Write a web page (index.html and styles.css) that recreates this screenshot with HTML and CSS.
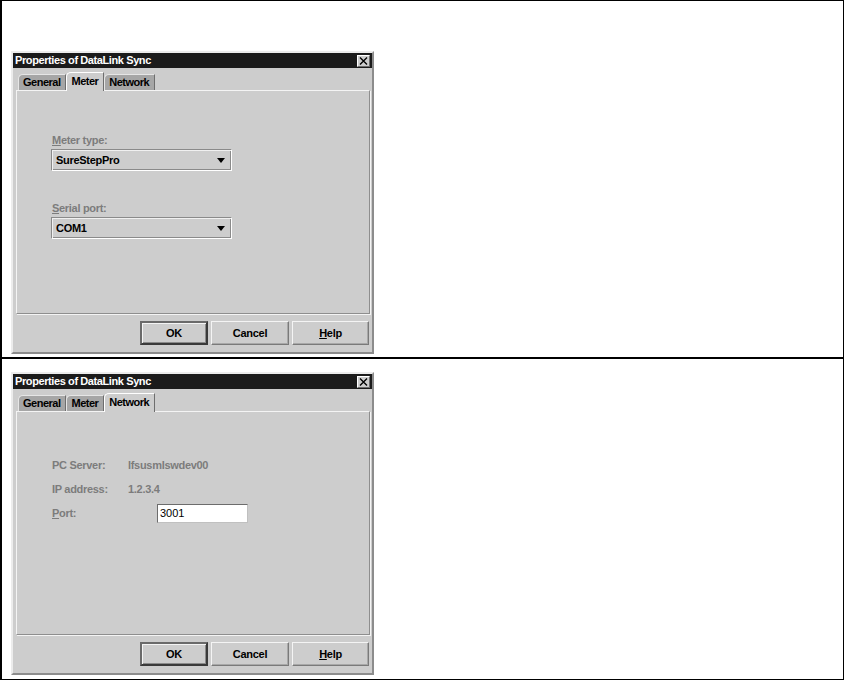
FILE: index.html
```html
<!DOCTYPE html>
<html>
<head>
<meta charset="utf-8">
<link rel="stylesheet" href="styles.css">
</head>
<body>
<div class="frame">
  <div class="cell cell-top">
    <div class="dialog">
      <div class="titlebar">
        <span class="title">Properties of DataLink Sync</span>
        <span class="close"><svg width="9" height="8" viewBox="0 0 9 8"><path d="M1 0.5 L8 7.5 M8 0.5 L1 7.5" stroke="#000" stroke-width="1.4" fill="none"/></svg></span>
      </div>
      <div class="tabs">
        <div class="tab">General</div>
        <div class="tab tab-active">Meter</div>
        <div class="tab">Network</div>
      </div>
      <div class="panel panel-meter">
        <div class="label"><u>M</u>eter type:</div>
        <div class="combo"><span>SureStepPro</span><span class="arrow"></span></div>
        <div class="label label-serial"><u>S</u>erial port:</div>
        <div class="combo"><span>COM1</span><span class="arrow"></span></div>
      </div>
      <div class="buttons">
        <div class="btn btn-default">OK</div>
        <div class="btn btn-cancel">Cancel</div>
        <div class="btn btn-help"><u>H</u>elp</div>
      </div>
    </div>
  </div>
  <div class="cell cell-bottom">
    <div class="dialog">
      <div class="titlebar">
        <span class="title">Properties of DataLink Sync</span>
        <span class="close"><svg width="9" height="8" viewBox="0 0 9 8"><path d="M1 0.5 L8 7.5 M8 0.5 L1 7.5" stroke="#000" stroke-width="1.4" fill="none"/></svg></span>
      </div>
      <div class="tabs">
        <div class="tab">General</div>
        <div class="tab">Meter</div>
        <div class="tab tab-active">Network</div>
      </div>
      <div class="panel panel-net">
        <div class="row"><span class="key">PC Server:</span><span class="val">lfsusmlswdev00</span></div>
        <div class="row"><span class="key">IP address:</span><span class="val">1.2.3.4</span></div>
        <div class="row row-port"><span class="key key-port"><u>P</u>ort:</span><span class="input">3001</span></div>
      </div>
      <div class="buttons">
        <div class="btn btn-default">OK</div>
        <div class="btn btn-cancel">Cancel</div>
        <div class="btn btn-help"><u>H</u>elp</div>
      </div>
    </div>
  </div>
</div>
</body>
</html>
```

FILE: styles.css
```css
html, body {
  margin: 0;
  padding: 0;
  background: #fff;
}

.frame {
  width: 844px;
  height: 680px;
  box-sizing: border-box;
  border: 1px solid #000;
  border-left-width: 2px;
  font-family: "Liberation Sans", Arial, sans-serif;
  font-size: 11px;
  font-weight: bold;
}

.cell-top {
  height: 358px;
  box-sizing: border-box;
  border-bottom: 2px solid #000;
  padding: 50px 0 0 9px;
}

.cell-bottom {
  padding: 13px 0 0 9px;
}

.dialog {
  width: 363px;
  height: 303px;
  box-sizing: border-box;
  background: #cdcdcd;
  border-top: 2px solid #ececec;
  border-left: 2px solid #ececec;
  border-right: 2px solid #8c8c8c;
  border-bottom: 2px solid #8c8c8c;
  display: flex;
  flex-direction: column;
}

.titlebar {
  height: 15px;
  background: #1b1b1b;
  color: #fff;
  display: flex;
  align-items: center;
  justify-content: space-between;
  padding: 0 2px 0 2px;
  line-height: 15px;
}

.title {
  letter-spacing: -0.4px;
}

.close {
  width: 11px;
  height: 10px;
  background: #cdcdcd;
  border-top: 1px solid #fff;
  border-left: 1px solid #fff;
  border-right: 1px solid #6a6a6a;
  border-bottom: 1px solid #6a6a6a;
  display: flex;
  align-items: center;
  justify-content: center;
}

.tabs {
  height: 22px;
  box-sizing: border-box;
  display: flex;
  align-items: flex-end;
  padding-left: 5px;
}

.tab {
  height: 16px;
  box-sizing: border-box;
  padding: 0 5px 0 4px;
  line-height: 15px;
  background: #a6a6a6;
  color: #000;
  border-top: 1px solid #e6e6e6;
  border-left: 1px solid #e6e6e6;
  border-right: 1px solid #6e6e6e;
  border-top-left-radius: 5px;
  letter-spacing: -0.5px;
}

.tab-active {
  line-height: 17px;
  background: #cdcdcd;
  border-top-color: #fff;
  border-left-color: #fff;
  margin-bottom: -1px;
  position: relative;
  z-index: 1;
  height: 19px;
}

.panel {
  height: 224px;
  margin: 0 2px 0 3px;
  box-sizing: border-box;
  border-top: 1px solid #f4f4f4;
  border-left: 1px solid #f4f4f4;
  border-right: 1px solid #8e8e8e;
  border-bottom: 1px solid #8e8e8e;
  box-shadow: 1px 1px 0 #f4f4f4;
}

.panel-meter {
  padding: 43px 0 0 34px;
}

.label {
  color: #7c7c7c;
  line-height: 13px;
  margin-left: 1px;
  margin-bottom: 2px;
  letter-spacing: -0.3px;
}

.label-serial {
  margin-top: 31px;
}

.combo {
  width: 181px;
  height: 22px;
  box-sizing: border-box;
  border-top: 1px solid #8a8a8a;
  border-left: 1px solid #8a8a8a;
  border-right: 1px solid #fff;
  border-bottom: 1px solid #fff;
  box-shadow: inset 1px 1px 0 #f0f0f0, inset -1px -1px 0 #8a8a8a;
  display: flex;
  align-items: center;
  justify-content: space-between;
  padding: 0 6px 0 4px;
  color: #000;
  letter-spacing: -0.3px;
}

.arrow {
  width: 0;
  height: 0;
  border-left: 4px solid transparent;
  border-right: 4px solid transparent;
  border-top: 5px solid #000;
}

.panel-net {
  padding: 47px 0 0 35px;
}

.row {
  display: flex;
  align-items: center;
  height: 13px;
  line-height: 13px;
  margin-bottom: 11px;
  color: #7c7c7c;
  letter-spacing: -0.3px;
}

.key {
  width: 76px;
}

.key-port {
  width: 105px;
}

.row-port {
  height: 19px;
  margin-top: -3px;
}

.input {
  width: 91px;
  height: 19px;
  box-sizing: border-box;
  background: #fff;
  border-top: 1px solid #6c6c6c;
  border-left: 1px solid #6c6c6c;
  border-right: 1px solid #c0c0c0;
  border-bottom: 1px solid #c0c0c0;
  color: #000;
  font-weight: normal;
  padding-left: 2px;
  line-height: 17px;
  letter-spacing: 0;
}

.buttons {
  display: flex;
  justify-content: flex-end;
  gap: 3px;
  margin-top: 7px;
  padding-right: 3px;
}

.btn {
  height: 24px;
  box-sizing: border-box;
  display: flex;
  align-items: center;
  justify-content: center;
  color: #000;
  border-top: 1px solid #f4f4f4;
  border-left: 1px solid #f4f4f4;
  border-right: 1px solid #7a7a7a;
  border-bottom: 1px solid #7a7a7a;
  box-shadow: inset -1px -1px 0 #a8a8a8;
  letter-spacing: -0.3px;
}

.btn-default {
  width: 68px;
  border: 2px solid #6a6a6a;
  border-right-color: #3a3a3a;
  border-bottom-color: #3a3a3a;
  box-shadow: inset 1px 1px 0 #f4f4f4, inset -1px -1px 0 #8a8a8a;
}

.btn-cancel {
  width: 78px;
}

.btn-help {
  width: 77px;
}
```
